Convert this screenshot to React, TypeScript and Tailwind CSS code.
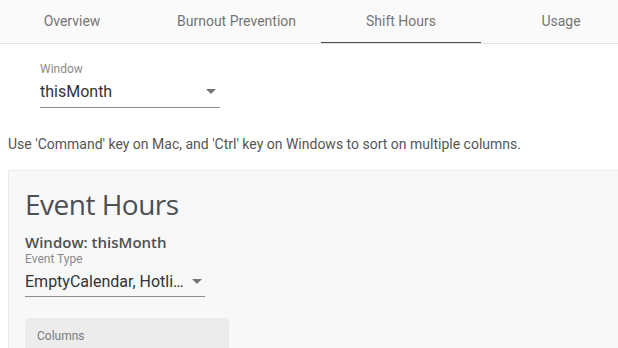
import React from "react";

function Arrow({ color = "#757575" }: { color?: string }) {
  return (
    <svg width="10" height="5" viewBox="0 0 10 5" className="shrink-0">
      <path d="M0 0 L10 0 L5 5 Z" fill={color} />
    </svg>
  );
}

export default function App() {
  return (
    <div className="w-[618px] h-[348px] overflow-hidden bg-white font-['Roboto',sans-serif]">
      <div className="flex h-[44px] overflow-hidden bg-[#fafafa] border-b border-[#e0e0e0] text-[14px] text-[#757575]">
        <div className="w-[144px] shrink-0 flex items-center justify-center">Overview</div>
        <div className="w-[177px] shrink-0 flex items-center justify-center pl-[8px]">Burnout Prevention</div>
        <div className="w-[160px] shrink-0 flex items-center justify-center relative">
          Shift Hours
          <div className="absolute left-0 right-0 bottom-[-1px] h-[2px] bg-[#4d4f53]" />
        </div>
        <div className="w-[160px] shrink-0 flex items-center justify-center">Usage</div>
      </div>

      <div className="pl-2">
        <div className="ml-[32px] mt-[18px] w-[180px]">
          <div className="text-[12px] leading-[14px] text-[#8a8a8a]">Window</div>
          <div className="h-[32px] flex items-center justify-between border-b border-[#8e8e8e] pr-[4px]">
            <span className="text-[16px] leading-[19px] text-[#333333]">thisMonth</span>
            <Arrow />
          </div>
        </div>

        <div className="mt-[26px] text-[14px] leading-[20px] text-[#555555]">
          Use 'Command' key on Mac, and 'Ctrl' key on Windows to sort on multiple columns.
        </div>

        <div className="mt-[16px] h-[200px] border-t border-l border-[#ebebeb] bg-[#f8f8f8] pl-[16px] pt-[14px]">
          <div className="font-['Open_Sans',sans-serif] font-medium text-[28px] leading-[38px] tracking-[-0.5px] text-[#4d4f53]">
            Event Hours
          </div>
          <div className="mt-[9px] font-['Open_Sans',sans-serif] font-semibold text-[15px] leading-[20px] text-[#4d4f53]">
            Window: thisMonth
          </div>
          <div className="w-[180px]">
            <div className="text-[12px] leading-[14px] text-[#8a8a8a]">Event Type</div>
            <div className="h-[31px] flex items-center justify-between border-b border-[#8e8e8e] pr-[3px]">
              <span className="text-[16px] leading-[19px] text-[#333333] whitespace-nowrap">EmptyCalendar, Hotli…</span>
              <Arrow />
            </div>
          </div>
          <div className="mt-[21px] w-[204px] h-[56px] rounded-t-[4px] bg-[#ececec] pl-[12px] pr-[16px] pt-[11px]">
            <div className="text-[12px] leading-[14px] text-[#7a7a7a]">Columns</div>
            <div className="flex justify-end mt-[13px]">
              <Arrow color="#5f5f5f" />
            </div>
          </div>
        </div>
      </div>
    </div>
  );
}
